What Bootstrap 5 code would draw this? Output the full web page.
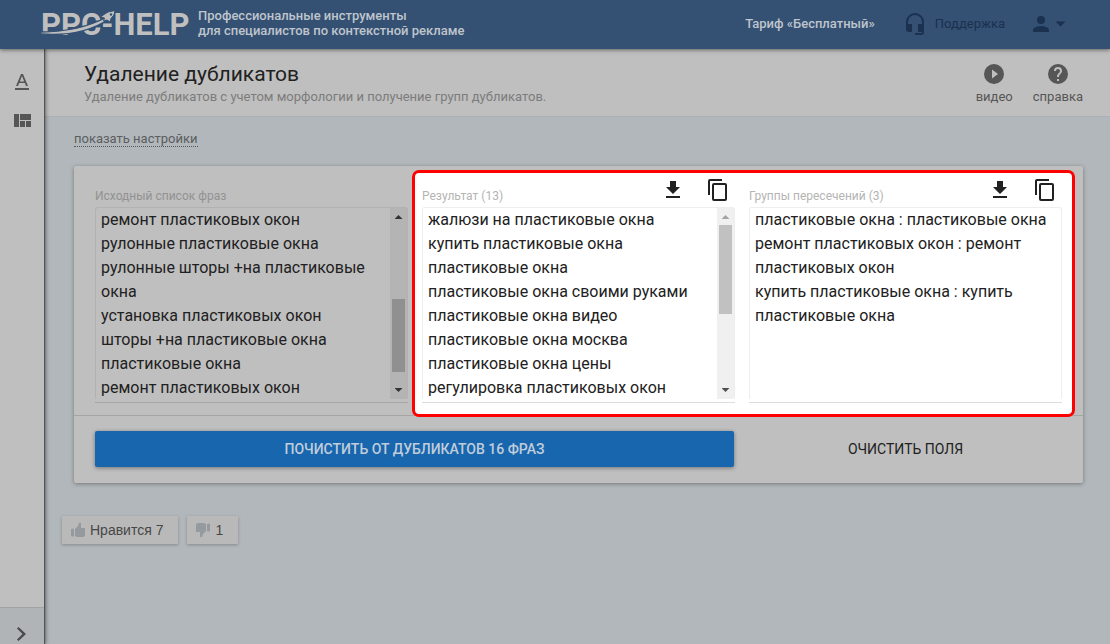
<!DOCTYPE html>
<html lang="ru">
<head>
<meta charset="utf-8">
<meta name="viewport" content="width=device-width, initial-scale=1">
<title>Удаление дубликатов — PPC-HELP</title>
<link href="https://cdn.jsdelivr.net/npm/bootstrap@5.3.0/dist/css/bootstrap.min.css" rel="stylesheet">
<style>
:root { --panel: #bfbfbf; --page: #b2b7bb; --brand: #345073; --ink: #212121; --muted: #565656; }
body { font-family: Roboto, "Liberation Sans", sans-serif; font-size: 13px; line-height: 16px; color: var(--ink); background: var(--page); }
svg { display: block; fill: currentColor; flex-shrink: 0; }
a { color: inherit; }

.topbar { height: 49px; padding: 0 44px 0 41px; background: var(--brand); color: #bfc5cc; z-index: 3; box-shadow: 0 1px 4px rgba(0,0,0,.5); font-weight: 500; }
.logo { font-size: 31px; line-height: 48px; font-weight: 700; color: var(--panel); width: 148px; white-space: nowrap; }
.logo svg { position: absolute; left: 0; top: 8px; }
.tagline { line-height: 15px; margin: 0 0 3px 9px; }
.topnav { padding-bottom: 2px; }
.dim-link { color: #1a3150; font-weight: 400; }

.siderail { width: 44px; background: var(--panel); color: var(--muted); z-index: 2; box-shadow: 1px 0 1px #555, 2px 0 4px rgba(0,0,0,.4); }
.siderail nav { padding-top: 23px; gap: 18px; }
.rail-toggle { height: 37px; padding-top: 14px; border: 0; border-top: 1px solid #a3a3a3; background: #b1b4b6; color: #4a4a4a; }

.headline { min-height: 68px; padding: 13px 27px 0 40px; background: var(--panel); border-bottom: 1px solid #acb0b2; }
.headline h1 { font-size: 21px; line-height: 24px; font-weight: 400; margin: 0; }
.headline p { margin: 2px 0 0; line-height: 18px; color: #7c7c7c; }
.help-links { gap: 20px; color: var(--muted); }
.help-links span { margin-top: 3px; }

.workspace { padding: 14px 27px 0 30px; }
.settings-link { color: #5b5e60; border-bottom: 1px dotted #555; line-height: 15px; }
.tool-panel { margin-top: 19px; background: var(--panel); border-radius: 2px; box-shadow: 0 1px 4px rgba(0,0,0,.35); }
.lists, .actions { display: grid; grid-template-columns: repeat(3, minmax(0, 1fr)); column-gap: 14px; padding: 0 21px; }
.lists { height: 250px; border-bottom: 1px solid #a5a5a5; }
.spotlight { grid-column: span 2; display: grid; grid-template-columns: repeat(2, minmax(0, 1fr)); column-gap: 14px; height: 247px; margin: 4px -13px 0 -10px; padding: 0 10px 0 7px; background: #fff; border: 3px solid red; border-radius: 7px; position: relative; }
.caption-row { height: 41px; padding-bottom: 3px; }
.spotlight .caption-row { height: 34px; }
.caption-row label { font-size: 12px; line-height: 16px; color: #b4b4b4; }
.source label { color: #929292; }
.icon-btn { border: 0; padding: 0; background: none; color: var(--ink); }
.copy-btn { margin: 0 5px 0 21px; }
.textbox { height: 193px; border: 1px solid #eee; border-bottom-color: transparent; border-radius: 3px; overflow: hidden; }
.source .textbox { border-color: #b2b2b2; border-bottom-color: transparent; }
.textbox textarea { flex: 1; min-width: 0; height: 194px; padding: 0 5px; border: 0; outline: 0; resize: none; overflow: hidden; background: transparent; color: var(--ink); font-size: 16px; line-height: 24px; }
.field-line { height: 3px; border-bottom: 1px solid #ddd; }
.source .field-line { border-color: #a5a5a5; }
.scroller { width: 17px; background: #f0f0f0; padding: 7px 2px; }
.scroller i { display: block; width: 13px; background: #c1c1c1; }
.scroller .arrow { width: 8px; height: 4px; background: #505050; clip-path: polygon(0 100%, 50% 0, 100% 100%); flex-shrink: 0; }
.scroller .arrow.down { clip-path: polygon(0 0, 100% 0, 50% 100%); }
.scroller .arrow.off { background: #a3a3a3; }
.thumb-top { height: 89px; margin: 6px 0 auto; }
.thumb-end { height: 73px; margin: auto 0 16px; }
.source .scroller { background: #b4b4b4; }
.source .scroller i { background: #909090; }
.source .scroller .arrow { background: #333; }

.actions { padding-top: 15px; padding-bottom: 16px; }
.actions .btn { height: 36px; padding: 0; border: 0; border-radius: 2px; font-size: 14px; line-height: 34px; }
.run-btn { grid-column: span 2; margin-right: 1px; background: #1766ae; color: #c0cddb; font-weight: 500; box-shadow: 0 1px 4px rgba(0,0,0,.4); }
.clear-btn { color: var(--ink); }

.votes { margin: 33px 0 0 -12px; gap: 9px; }
.vote { height: 28px; padding: 0 15px 0 8px; border: 0; background: #b9b9b9; color: #474747; box-shadow: 0 1px 3px rgba(0,0,0,.25); font-family: "Liberation Sans", Arial, sans-serif; font-size: 14px; gap: 4px; }
.vote svg { color: #949a9e; }
</style>
</head>
<body>
<div class="d-flex flex-column min-vh-100">
  <header class="topbar d-flex align-items-center position-relative">
    <a href="#" class="logo position-relative text-decoration-none">PPC-HELP
      <svg width="80" height="32" viewBox="0 0 80 32" aria-hidden="true">
        <path d="M-1 23C27 23 47 18 66 8L68 10C49 23 26 27 -1 25Z" fill="#bfbfbf" stroke="#345073" stroke-width="1.4"/>
        <path d="M74 1.500L67 3L63 5.500L59.500 8L63.500 9L62.500 12L66 11L69 13L70 9.500L73 6Z" fill="#bfbfbf" stroke="#345073" stroke-width="1"/>
        <circle cx="70" cy="5.500" r="1.2" fill="#345073"/>
      </svg>
    </a>
    <div class="tagline">Профессиональные инструменты<br>для специалистов по контекстной рекламе</div>
    <nav class="topnav d-flex align-items-center ms-auto">
      <a href="#" class="text-decoration-none">Тариф «Бесплатный»</a>
      <a href="#" class="dim-link text-decoration-none d-flex align-items-center ms-4 ps-1">
        <svg width="24" height="24" viewBox="0 0 24 24"><path d="M12 1a9 9 0 0 0-9 9v7a3 3 0 0 0 3 3h3v-8H5v-2a7 7 0 0 1 14 0v2h-4v8h4v1h-7v2h6a3 3 0 0 0 3-3V10a9 9 0 0 0-9-9z"/></svg>
        <span class="ms-2">Поддержка</span>
      </a>
      <button class="dim-link btn p-0 border-0 d-flex align-items-center ms-4" aria-label="Профиль">
        <svg width="24" height="24" viewBox="0 0 24 24"><path d="M12 12a4 4 0 1 0 0-8 4 4 0 0 0 0 8zm0 2c-2.700 0-8 1.300-8 4v2h16v-2c0-2.700-5.300-4-8-4z"/></svg>
        <svg width="13" height="24" viewBox="0 0 13 24"><path d="M2.500 9.500h10L7.500 14.500z"/></svg>
      </button>
    </nav>
  </header>

  <div class="d-flex flex-grow-1">
    <aside class="siderail d-flex flex-column position-relative">
      <nav class="d-flex flex-column align-items-center">
        <a href="#" aria-label="Текст"><svg width="20" height="20" viewBox="0 0 20 20"><path d="M3 16h14v2H3zM9 2h2l5 12h-2l-1.200-3H7.200L6 14H4zm1 2L7.900 9.500h4.200z"/></svg></a>
        <a href="#" aria-label="Таблица"><svg width="20" height="20" viewBox="0 0 20 20"><path d="M2 4h5v13H2zM8 4h11v6H8zM8 11h5v6H8zM14 11h5v6h-5z"/></svg></a>
      </nav>
      <button class="rail-toggle mt-auto d-flex justify-content-center" aria-label="Развернуть меню">
        <svg width="24" height="24" viewBox="0 0 24 24"><path d="M7 6.500L8.500 5L16 12l-7.500 7L7 17.500L12.500 12z"/></svg>
      </button>
    </aside>

    <main class="flex-grow-1 overflow-hidden">
      <div class="headline d-flex justify-content-between">
        <div>
          <h1>Удаление дубликатов</h1>
          <p>Удаление дубликатов с учетом морфологии и получение групп дубликатов.</p>
        </div>
        <div class="help-links d-flex">
          <a href="#" class="text-decoration-none d-flex flex-column align-items-center">
            <svg width="24" height="24" viewBox="0 0 24 24"><path d="M12 2a10 10 0 1 0 0 20 10 10 0 0 0 0-20zm-2 14.500v-9l6 4.500z"/></svg>
            <span>видео</span></a>
          <a href="#" class="text-decoration-none d-flex flex-column align-items-center">
            <svg width="24" height="24" viewBox="0 0 24 24"><path d="M12 2a10 10 0 1 0 0 20 10 10 0 0 0 0-20zm1 17h-2v-2h2zm2.070-7.750-.9.920C13.450 12.900 13 13.500 13 15h-2v-.5c0-1.100.450-2.100 1.170-2.830l1.240-1.260A2 2 0 1 0 10 9H8a4 4 0 1 1 8 0c0 .880-.360 1.680-.930 2.250z"/></svg>
            <span>справка</span></a>
        </div>
      </div>

      <div class="workspace">
        <a href="#" class="settings-link d-inline-block text-decoration-none">показать настройки</a>

        <section class="tool-panel">
          <div class="lists">
            <div class="source">
              <div class="caption-row d-flex align-items-end"><label for="src">Исходный список фраз</label></div>
              <div class="textbox d-flex">
                <textarea id="src" spellcheck="false">ремонт пластиковых окон
рулонные пластиковые окна
рулонные шторы +на пластиковые окна
установка пластиковых окон
шторы +на пластиковые окна
пластиковые окна
ремонт пластиковых окон</textarea>
                <div class="scroller d-flex flex-column align-items-center"><i class="arrow"></i><i class="thumb-end"></i><i class="arrow down"></i></div>
              </div>
              <div class="field-line"></div>
            </div>

            <div class="spotlight">
              <div>
                <div class="caption-row d-flex align-items-end">
                  <label for="res">Результат (13)</label>
                  <button class="icon-btn ms-auto" aria-label="Скачать"><svg width="24" height="28" viewBox="0 0 24 28"><path d="M19 11h-4V5H9v6H5l7 7zM5 20v2h14v-2z"/></svg></button>
                  <button class="icon-btn copy-btn" aria-label="Копировать"><svg width="24" height="28" viewBox="0 0 24 28"><path d="M16 3H4a2 2 0 0 0-2 2v14h2V5h12zm3 4H8a2 2 0 0 0-2 2v14a2 2 0 0 0 2 2h11a2 2 0 0 0 2-2V9a2 2 0 0 0-2-2zm0 16H8V9h11z"/></svg></button>
                </div>
                <div class="textbox d-flex">
                  <textarea id="res" spellcheck="false">жалюзи на пластиковые окна
купить пластиковые окна
пластиковые окна
пластиковые окна своими руками
пластиковые окна видео
пластиковые окна москва
пластиковые окна цены
регулировка пластиковых окон</textarea>
                  <div class="scroller d-flex flex-column align-items-center"><i class="arrow off"></i><i class="thumb-top"></i><i class="arrow down"></i></div>
                </div>
                <div class="field-line"></div>
              </div>
              <div>
                <div class="caption-row d-flex align-items-end">
                  <label for="grp">Группы пересечений (3)</label>
                  <button class="icon-btn ms-auto" aria-label="Скачать"><svg width="24" height="28" viewBox="0 0 24 28"><path d="M19 11h-4V5H9v6H5l7 7zM5 20v2h14v-2z"/></svg></button>
                  <button class="icon-btn copy-btn" aria-label="Копировать"><svg width="24" height="28" viewBox="0 0 24 28"><path d="M16 3H4a2 2 0 0 0-2 2v14h2V5h12zm3 4H8a2 2 0 0 0-2 2v14a2 2 0 0 0 2 2h11a2 2 0 0 0 2-2V9a2 2 0 0 0-2-2zm0 16H8V9h11z"/></svg></button>
                </div>
                <div class="textbox d-flex">
                  <textarea id="grp" spellcheck="false">пластиковые окна : пластиковые окна
ремонт пластиковых окон : ремонт пластиковых окон
купить пластиковые окна : купить пластиковые окна</textarea>
                </div>
                <div class="field-line"></div>
              </div>
            </div>
          </div>
          <div class="actions">
            <button class="btn run-btn">ПОЧИСТИТЬ ОТ ДУБЛИКАТОВ 16 ФРАЗ</button>
            <button class="btn clear-btn">ОЧИСТИТЬ ПОЛЯ</button>
          </div>
        </section>

        <div class="votes d-flex">
          <button class="vote d-flex align-items-center"><svg width="16" height="16" viewBox="0 0 16 16"><path d="M1 7q2-1 3 0v7q-1 1-3 0zM5 7l3-3 1-3q2-1 2 1v4h3q2 0 1 2v5q0 2-2 2H7l-2-1z"/></svg>Нравится 7</button>
          <button class="vote d-flex align-items-center"><svg width="16" height="16" viewBox="0 0 16 16"><path d="M15 9q-2 1-3 0V2q1-1 3 0zM11 9l-3 3-1 3q-2 1-2-1v-4H2q-2 0-1-2V3q0-2 2-2h6l2 1z"/></svg>1</button>
        </div>
      </div>
    </main>
  </div>
</div>
<script src="https://cdn.jsdelivr.net/npm/bootstrap@5.3.0/dist/js/bootstrap.bundle.min.js"></script>
</body>
</html>
